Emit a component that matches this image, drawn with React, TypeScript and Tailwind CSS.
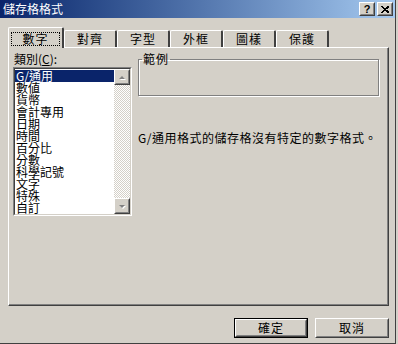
import React from "react";

const FONT = "font-['Noto_Sans_CJK_TC','Noto_Sans',sans-serif]";

function Raised({ className = "", children }: { className?: string; children?: React.ReactNode }) {
  return (
    <div className={`border border-t-white border-l-white border-r-[#404040] border-b-[#404040] ${className}`}>
      <div className="w-full h-full border border-t-[#d4d0c8] border-l-[#d4d0c8] border-r-[#808080] border-b-[#808080] flex items-center justify-center">
        {children}
      </div>
    </div>
  );
}

function Arrow({ up }: { up?: boolean }) {
  return (
    <svg width="9" height="5" viewBox="0 0 9 5" className="block">
      {up ? (
        <>
          <polygon points="2,5 5,2 8,5" fill="#ffffff" />
          <polygon points="1,4 4,1 7,4" fill="#808080" />
        </>
      ) : (
        <>
          <polygon points="2,1 8,1 5,4" fill="#ffffff" transform="translate(0,1)" />
          <polygon points="1,1 7,1 4,4" fill="#808080" />
        </>
      )}
    </svg>
  );
}

const items = ["G/通用", "數値", "貨幣", "會計專用", "日期", "時間", "百分比", "分數", "科學記號", "文字", "特殊", "自訂"];
const tabs = ["對齊", "字型", "外框", "圖樣", "保護"];

export default function App() {
  return (
    <div className={`w-[398px] h-[344px] bg-[#d4d0c8] ${FONT} text-[12px] leading-[12px] text-black overflow-hidden`}>
      <div className="w-[396px] h-[344px] border-r border-b border-[#404040] flex flex-col">
        {/* Title bar */}
        <div className="h-[18px] bg-linear-to-r from-[#0a246a] to-[#a6caf0] flex items-center pl-[3px] pr-[2px]">
          <span className="text-white text-[12px] leading-[12px] tracking-[0px]">儲存格格式</span>
          <div className="flex-1" />
          <Raised className="w-[16px] h-[14px] bg-[#d4d0c8]">
            <span className="font-['Liberation_Sans',sans-serif] font-bold text-[11px] leading-[10px] text-black">?</span>
          </Raised>
          <Raised className="w-[16px] h-[14px] bg-[#d4d0c8] ml-[2px]">
            <svg width="8" height="7" viewBox="0 0 8 7" className="block">
              <path d="M0.5 0.5 L7 6.5 M1.5 0.5 L8 6.5 M7 0.5 L0.5 6.5 M8 0.5 L1.5 6.5" stroke="#000" strokeWidth="1" shapeRendering="crispEdges" />
            </svg>
          </Raised>
        </div>

        {/* Body */}
        <div className="flex flex-col pl-[8px] pt-[9px]">
          {/* Tabs */}
          <div className="flex items-end h-[20px] relative z-10">
            <div className="w-[56px] h-[21px] -mb-[1px] bg-[#d4d0c8] border-t border-l border-white border-r-[2px] border-r-[#404040] rounded-t-[2px] flex items-start justify-center pt-[4px]">
              <span className="border border-dotted border-black px-[10px] py-[0px] leading-[12px] tracking-[1px]">數字</span>
            </div>
            {tabs.map((t) => (
              <div
                key={t}
                className="w-[53px] h-[17px] bg-[#d4d0c8] border-t border-l border-white border-r-[2px] border-r-[#404040] rounded-t-[2px] flex items-center justify-center tracking-[1px]"
              >
                {t}
              </div>
            ))}
          </div>

          {/* Panel */}
          <div className="w-[381px] h-[259px] border-t border-l border-white border-r border-b border-r-[#404040] border-b-[#404040] shadow-[inset_-1px_-1px_0_#808080] flex pl-[4px] pt-[5px]">
            {/* Left column */}
            <div className="w-[119px] flex flex-col">
              <div className="pl-[1px] h-[12px] leading-[12px]">
                類別(<span className="underline">C</span>):
              </div>
              <div className="mt-[2px] w-[119px] h-[149px] border border-t-[#808080] border-l-[#808080] border-r-white border-b-white">
                <div className="w-full h-full border border-t-[#404040] border-l-[#404040] border-r-[#d4d0c8] border-b-[#d4d0c8] flex bg-white">
                  <div className="flex-1 flex flex-col pt-[1px]">
                    {items.map((it, i) => (
                      <div
                        key={it}
                        className={`h-[12px] leading-[12px] pl-[1px] whitespace-nowrap ${i === 0 ? "bg-[#0a246a] text-white" : ""}`}
                      >
                        {it}
                      </div>
                    ))}
                  </div>
                  <div className="w-[16px] flex flex-col bg-[repeating-conic-gradient(#d4d0c8_0_25%,#ffffff_0_50%)] bg-[length:2px_2px]">
                    <Raised className="w-[16px] h-[16px] bg-[#d4d0c8]">
                      <Arrow up />
                    </Raised>
                    <div className="flex-1" />
                    <Raised className="w-[16px] h-[16px] bg-[#d4d0c8]">
                      <Arrow />
                    </Raised>
                  </div>
                </div>
              </div>
            </div>

            {/* Right column */}
            <div className="ml-[6px] w-[242px] flex flex-col">
              <fieldset className="h-[43px] border border-[#808080] shadow-[1px_1px_0_#ffffff,inset_1px_1px_0_#ffffff] mr-[1px]">
                <legend className="ml-[3px] px-[1px] text-[12px] leading-[12px] tracking-[1px]">範例</legend>
              </fieldset>
              <div className="mt-[36px] whitespace-nowrap tracking-[0.5px]">G/通用格式的儲存格沒有特定的數字格式。</div>
            </div>
          </div>

          {/* Buttons */}
          <div className="w-[381px] flex justify-end gap-[7px] mt-[12px]">
            <div className="w-[74px] h-[20px] border border-black">
              <Raised className="w-full h-full bg-[#d4d0c8]">
                <span className="tracking-[1px]">確定</span>
              </Raised>
            </div>
            <Raised className="w-[74px] h-[20px] bg-[#d4d0c8]">
              <span className="tracking-[1px]">取消</span>
            </Raised>
          </div>
        </div>
      </div>
    </div>
  );
}
